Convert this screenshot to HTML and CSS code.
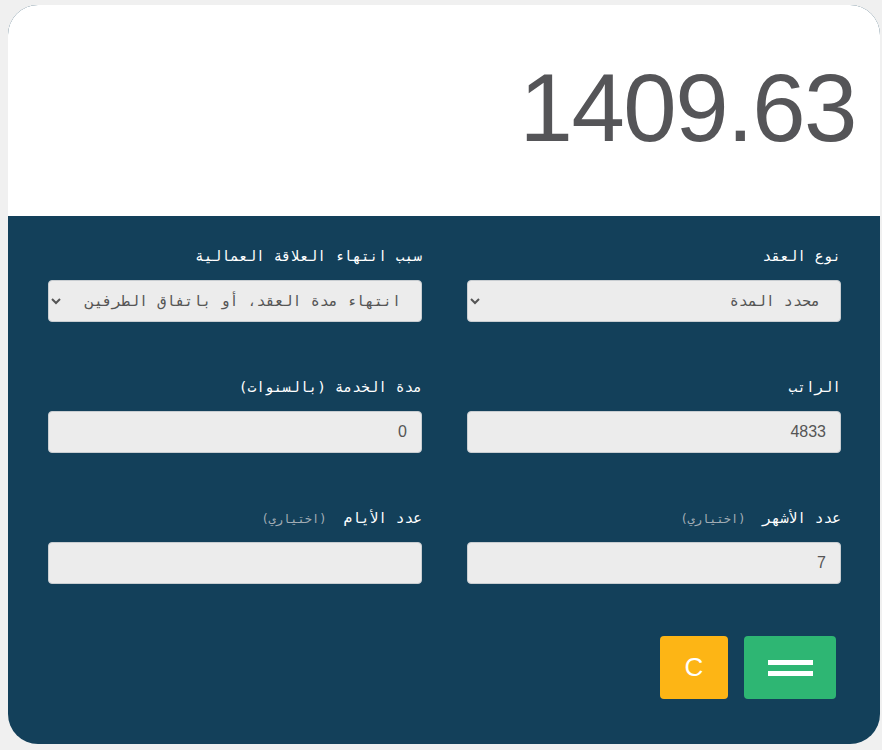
FILE: index.html
```html
<!DOCTYPE html>
<html lang="ar">
<head>
<meta charset="utf-8">
<title>حاسبة مكافأة نهاية الخدمة</title>
<link rel="stylesheet" href="styles.css">
</head>
<body>
<div class="card">
  <div class="result">1409.63</div>
  <form class="calc" dir="rtl">
    <div class="grid">
      <div class="field">
        <label class="label">نوع العقد</label>
        <select class="control">
          <option>محدد المدة</option>
          <option>غير محدد المدة</option>
        </select>
      </div>
      <div class="field">
        <label class="label">سبب انتهاء العلاقة العمالية</label>
        <select class="control">
          <option>انتهاء مدة العقد، أو باتفاق الطرفين على إنهاء العقد</option>
        </select>
      </div>
      <div class="field">
        <label class="label">الراتب</label>
        <input class="control" type="text" value="4833">
      </div>
      <div class="field">
        <label class="label">مدة الخدمة (بالسنوات)</label>
        <input class="control" type="text" value="0">
      </div>
      <div class="field">
        <label class="label">عدد الأشهر<span class="opt">(اختياري)</span></label>
        <input class="control" type="text" value="7">
      </div>
      <div class="field">
        <label class="label">عدد الأيام<span class="opt">(اختياري)</span></label>
        <input class="control" type="text" value="">
      </div>
    </div>
    <div class="actions">
      <button type="button" class="btn btn-eq" aria-label="احسب"><span class="bar"></span><span class="bar"></span></button>
      <button type="button" class="btn btn-c">C</button>
    </div>
  </form>
</div>
</body>
</html>
```
FILE: styles.css
```css
html, body {
  margin: 0;
  padding: 0;
}
body {
  background: #f0f0f0;
  padding: 5px 2px 5px 8px;
  font-family: "Liberation Sans", "DejaVu Sans Mono", sans-serif;
}
.card {
  width: 872px;
  height: 739px;
  border-radius: 30px;
  overflow: hidden;
  background: #13405a;
  display: flex;
  flex-direction: column;
}
.result {
  background: #ffffff;
  height: 211px;
  box-sizing: border-box;
  text-align: right;
  padding: 48px 24px 0 0;
  font-size: 96px;
  letter-spacing: -1.5px;
  line-height: 110px;
  color: #555558;
  font-family: "Liberation Sans", Arial, sans-serif;
}
.calc {
  padding: 29px 39px 0 40px;
}
.grid {
  display: grid;
  grid-template-columns: 374px 374px;
  column-gap: 45px;
  row-gap: 54px;
}
.field {
  display: flex;
  flex-direction: column;
  gap: 13px;
}
.label {
  display: flex;
  align-items: baseline;
  gap: 17px;
  color: #ffffff;
  font-family: "DejaVu Sans Mono", monospace;
  font-size: 14.5px;
  line-height: 22px;
  height: 22px;
}
.opt {
  color: #a3aeb6;
  font-size: 12px;
}
.control {
  box-sizing: border-box;
  height: 42px;
  width: 100%;
  background-color: #ececec;
  border: 1px solid #c8cdd1;
  border-radius: 4px;
  color: #555555;
  font-family: "Liberation Sans", "DejaVu Sans Mono", sans-serif;
  font-size: 16px;
  padding: 0 14px;
  margin: 0;
  direction: rtl;
  outline: none;
}
select.control {
  font-family: "DejaVu Sans Mono", monospace;
  font-size: 15px;
  padding-right: 16px;
}
.actions {
  display: flex;
  gap: 16px;
  padding-top: 52px;
  padding-right: 5px;
}
.btn {
  height: 63px;
  border: none;
  border-radius: 4px;
  color: #ffffff;
  font-family: "Liberation Sans", Arial, sans-serif;
  padding: 0;
  cursor: pointer;
}
.btn-c {
  width: 68px;
  background: #fdb515;
  font-size: 26px;
}
.btn-eq {
  width: 92px;
  background: #2eb673;
  display: flex;
  flex-direction: column;
  align-items: center;
  justify-content: center;
  gap: 6px;
}
.bar {
  display: block;
  width: 45px;
  height: 5px;
  background: #ffffff;
}
```
